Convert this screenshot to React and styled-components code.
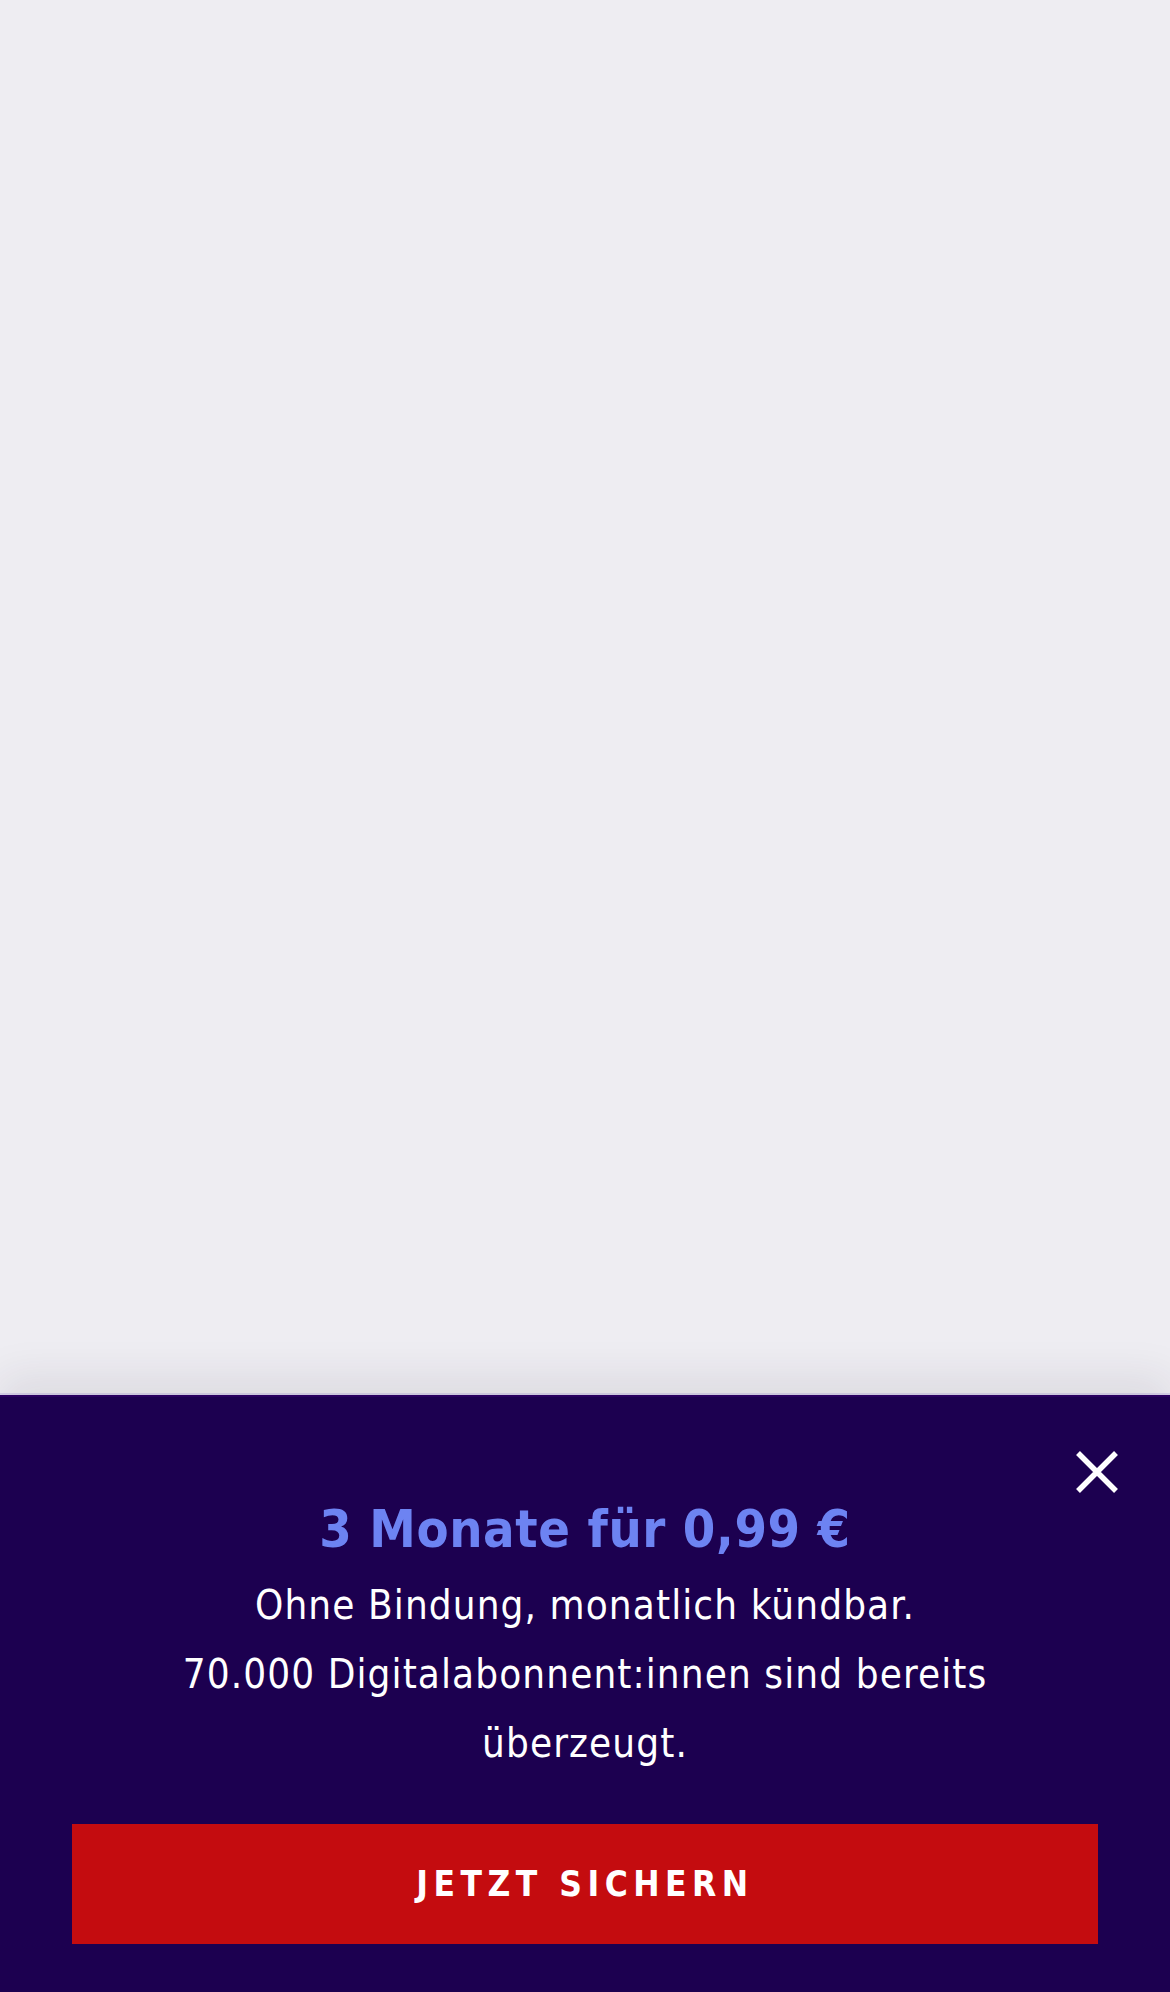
import React from "react";
import styled, { createGlobalStyle } from "styled-components";

const GlobalStyle = createGlobalStyle`
  html, body {
    margin: 0;
    padding: 0;
    background: #eeedf2;
  }
  body {
    font-family: "DejaVu Sans Condensed", "DejaVu Sans", sans-serif;
  }
`;

const Screen = styled.div`
  display: flex;
  flex-direction: column;
  min-height: 100vh;
`;

const Content = styled.main`
  flex: 1;
  background: #eeedf2;
`;

const Banner = styled.section`
  position: relative;
  background: #1c0050;
  border-top: 2px solid #2a0060;
  box-shadow: 0 -18px 40px rgba(40, 30, 60, 0.09), 0 -2px 0 #d8d3ea;
  padding: 100px 72px 48px;
  display: flex;
  flex-direction: column;
  align-items: center;
`;

const CloseButton = styled.button`
  position: absolute;
  top: 52px;
  right: 50px;
  width: 46px;
  height: 46px;
  padding: 0;
  border: none;
  background: transparent;
  cursor: pointer;
  display: flex;
  align-items: center;
  justify-content: center;
`;

const Title = styled.h2`
  margin: 0;
  color: #6d83f2;
  font-weight: 700;
  font-size: 52px;
  line-height: 64px;
  letter-spacing: 0.6px;
  text-align: center;
`;

const Copy = styled.p`
  margin: 10px 0 0;
  max-width: 860px;
  color: #ffffff;
  font-size: 40px;
  line-height: 69px;
  letter-spacing: 1.1px;
  text-align: center;
`;

const CtaButton = styled.button`
  margin-top: 46px;
  width: 100%;
  height: 120px;
  border: none;
  background: #c40c0f;
  color: #ffffff;
  font-family: inherit;
  font-weight: 700;
  font-size: 35px;
  letter-spacing: 5.5px;
  text-transform: uppercase;
  cursor: pointer;
`;

const CloseIcon = () => (
  <svg width="44" height="44" viewBox="0 0 44 44" fill="none">
    <path d="M3 3 L41 41 M41 3 L3 41" stroke="#ffffff" strokeWidth="5.5" />
  </svg>
);

const App = () => {
  return (
    <Screen>
      <GlobalStyle />
      <Content />
      <Banner>
        <CloseButton aria-label="Schließen">
          <CloseIcon />
        </CloseButton>
        <Title>3 Monate für 0,99 €</Title>
        <Copy>
          Ohne Bindung, monatlich kündbar.
          <br />
          70.000 Digitalabonnent:innen sind bereits überzeugt.
        </Copy>
        <CtaButton>Jetzt sichern</CtaButton>
      </Banner>
    </Screen>
  );
};

export default App;
